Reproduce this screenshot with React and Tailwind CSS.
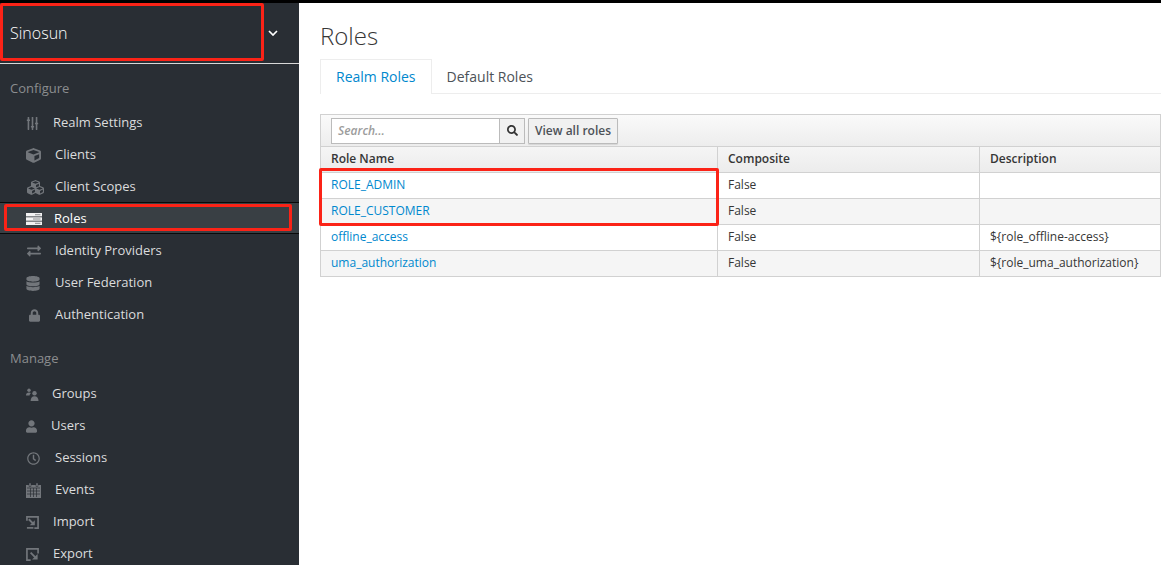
import React from 'react';
import {
  FaSlidersH, FaCube, FaCubes, FaExchangeAlt, FaDatabase, FaLock, FaUser,
  FaRegClock, FaSearch,
} from 'react-icons/fa';

function RolesIcon({ className }) {
  return (
    <svg viewBox="0 0 16 12" className={className}>
      <rect x="0" y="0" width="16" height="3.4" fill="#f2f2f2" />
      <rect x="0" y="4.3" width="16" height="3.4" fill="#f2f2f2" />
      <rect x="0" y="8.6" width="16" height="3.4" fill="#f2f2f2" />
      <rect x="9" y="1.2" width="5.5" height="1" fill="#8b8d8f" />
      <rect x="7" y="5.5" width="7.5" height="1" fill="#8b8d8f" />
      <rect x="9" y="9.8" width="5.5" height="1" fill="#8b8d8f" />
    </svg>
  );
}

function GroupsIcon({ className }) {
  return (
    <svg viewBox="0 0 13 13" className={className} fill="currentColor">
      <circle cx="3" cy="2.2" r="1.7" />
      <path d="M0 7.5C0 5.5 1.2 4.6 3 4.6c.8 0 1.4.2 1.9.5C4 6 3.6 6.8 3.5 7.5Z" />
      <circle cx="8.5" cy="5.2" r="2.2" />
      <path d="M4.6 13c0-3.2 1.4-4.8 3.9-4.8s4 1.6 4 4.8Z" />
    </svg>
  );
}

function CalendarIcon({ className }) {
  return (
    <svg viewBox="0 0 15 15" className={className}>
      <path d="M0 2h15v13H0Z" fill="currentColor" />
      <path d="M3 0h2v3.5H3ZM10 0h2v3.5h-2Z" fill="currentColor" stroke="#292e34" strokeWidth="0.5" />
      <path d="M1 5h13M1 8h13M1 11h13M4.5 5v9M7.5 5v9M10.5 5v9" stroke="#292e34" strokeWidth="0.7" fill="none" />
    </svg>
  );
}

function ImportIcon({ className }) {
  return (
    <svg viewBox="0 0 14 14" className={className} fill="none" stroke="currentColor">
      <path d="M1 5V1h12v12H9" strokeWidth="1.8" />
      <path d="M3 3.5 8 8.5" strokeWidth="2" />
      <path d="M9.5 4.5V10H4Z" fill="currentColor" stroke="none" />
      <path d="M1 12.8h7" strokeWidth="1.8" />
    </svg>
  );
}

function ExportIcon({ className }) {
  return (
    <svg viewBox="0 0 14 14" className={className} fill="none" stroke="currentColor">
      <path d="M5 13H1V1h12v5" strokeWidth="1.8" />
      <path d="M5 5 10 10" strokeWidth="2" />
      <path d="M12.5 6.5V12.5H6.5Z" fill="currentColor" stroke="none" />
    </svg>
  );
}

const configure = [
  { label: 'Realm Settings', icon: FaSlidersH, size: 'w-[13px] h-[13px] rotate-90', gap: 'w-[27px]' },
  { label: 'Clients', icon: FaCube, size: 'w-[15px] h-[15px]', gap: 'w-[29px]' },
  { label: 'Client Scopes', icon: FaCubes, size: 'w-[19px] h-[17px]', gap: 'w-[29px]' },
  { label: 'Roles', icon: RolesIcon, size: 'w-[16px] h-[12px]', gap: 'w-[28px]', active: true },
  { label: 'Identity Providers', icon: FaExchangeAlt, size: 'w-[16px] h-[14px]', gap: 'w-[29px]' },
  { label: 'User Federation', icon: FaDatabase, size: 'w-[14px] h-[15px]', gap: 'w-[29px]' },
  { label: 'Authentication', icon: FaLock, size: 'w-[11px] h-[13px] ml-[3px]', gap: 'w-[29px]' },
];

const manage = [
  { label: 'Groups', icon: GroupsIcon, size: 'w-[13px] h-[13px]', gap: 'w-[26px]' },
  { label: 'Users', icon: FaUser, size: 'w-[11px] h-[13px]', gap: 'w-[25px]' },
  { label: 'Sessions', icon: FaRegClock, size: 'w-[13px] h-[13px] ml-px', gap: 'w-[29px]' },
  { label: 'Events', icon: CalendarIcon, size: 'w-[15px] h-[15px]', gap: 'w-[29px]' },
  { label: 'Import', icon: ImportIcon, size: 'w-[13px] h-[13px]', gap: 'w-[27px]' },
  { label: 'Export', icon: ExportIcon, size: 'w-[13px] h-[13px]', gap: 'w-[27px]' },
];

const roles = [
  { name: 'ROLE_ADMIN', description: '' },
  { name: 'ROLE_CUSTOMER', description: '' },
  { name: 'offline_access', description: '${role_offline-access}' },
  { name: 'uma_authorization', description: '${role_uma_authorization}' },
];

function NavItem({ item }) {
  const Icon = item.icon;
  return (
    <div
      className={
        'relative flex h-8 items-center pl-[26px] text-[13px] ' +
        (item.active ? 'mt-[-1px] mb-px pt-px bg-[#393f44] border-y border-[#090909] text-white' : 'text-[#dbdcdd]')
      }
    >
      <div className={item.gap + ' shrink-0 flex items-center text-[#72767b]'}>
        <Icon className={item.size} />
      </div>
      <span>{item.label}</span>
      {item.active && (
        <div className="absolute left-[4px] top-px h-[27px] w-[288px] rounded-[2px] border-[3px] border-[#fb2317]" />
      )}
    </div>
  );
}

function Sidebar() {
  return (
    <div className="w-[299px] shrink-0 overflow-hidden bg-[#292e34]">
      <div className="relative flex h-[61px] items-center justify-between border-b border-[#d8d8d8] pl-2.5 pr-[21px]">
        <span className="text-base font-light text-white">Sinosun</span>
        <svg viewBox="0 0 10 6" className="h-[6px] w-[10px]" fill="none" stroke="#ffffff" strokeWidth="1.7">
          <path d="M1 1l4 4 4-4" />
        </svg>
        <div className="absolute left-0 top-0 h-[58px] w-[264px] rounded-[2px] border-[3px] border-[#fb2317]" />
      </div>
      <div className="pl-2.5 pt-[15px] pb-[10px] text-[13px] leading-[18px] text-[#8b8d8f]">Configure</div>
      <div>
        {configure.map((item) => <NavItem key={item.label} item={item} />)}
      </div>
      <div className="pl-2.5 pt-[18px] pb-[11px] text-[13px] leading-[18px] text-[#8b8d8f]">Manage</div>
      <div>
        {manage.map((item) => <NavItem key={item.label} item={item} />)}
      </div>
    </div>
  );
}

function RolesTable() {
  return (
    <div className="relative mt-5 border border-[#d1d1d1] text-xs text-[#363636]">
      <div className="flex h-8 items-center gap-[3px] bg-gradient-to-b from-[#fafafa] to-[#ededed] px-[10px] border-b border-[#d1d1d1]">
        <div className="flex h-[26px] w-[194px]">
          <div className="flex-1 border border-[#bbbbbb] bg-white pl-1.5 text-xs font-semibold italic leading-[24px] text-[#9c9c9c]">
            Search...
          </div>
          <div className="flex w-[25px] items-center justify-center border border-l-0 border-[#bbbbbb] bg-[#f1f1f1]">
            <FaSearch className="h-[11px] w-[11px] text-[#333333]" />
          </div>
        </div>
        <div className="flex h-[26px] items-center rounded-[1px] border border-[#bbbbbb] bg-[#f1f1f1] px-1.5 text-xs font-semibold text-[#4d5258] shadow-[0_1px_1px_rgba(0,0,0,0.1)]">
          View all roles
        </div>
      </div>
      <div className="grid grid-cols-[397px_262px_1fr] h-[26px] bg-gradient-to-b from-[#f5f5f5] to-[#ececec] border-b border-[#d1d1d1] font-semibold">
        <div className="flex items-center border-r border-[#d1d1d1] pb-px pl-[10px]">Role Name</div>
        <div className="flex items-center border-r border-[#d1d1d1] pb-px pl-[10px]">Composite</div>
        <div className="flex items-center pb-px pl-[10px]">Description</div>
      </div>
      {roles.map((role, i) => (
        <div
          key={role.name}
          className={
            'grid grid-cols-[397px_262px_1fr] ' +
            (i % 2 ? 'bg-[#f5f5f5] ' : 'bg-white ') +
            (i < roles.length - 1 ? 'h-[26px] border-b border-[#d1d1d1]' : 'h-[25px]')
          }
        >
          <div className="flex items-center border-r border-[#d1d1d1] pb-px pl-[10px] text-[#0088ce]">{role.name}</div>
          <div className="flex items-center border-r border-[#d1d1d1] pb-px pl-[10px]">False</div>
          <div className="flex items-center pb-px pl-[10px]">{role.description}</div>
        </div>
      ))}
      <div className="absolute left-[-2px] top-[53px] h-[58px] w-[400px] rounded-[2px] border-[3px] border-[#fb2317]" />
    </div>
  );
}

export default function App() {
  return (
    <div className="flex h-[565px] w-[1161px] flex-col overflow-hidden bg-white font-['Open_Sans',sans-serif]">
      <div className="h-[3px] shrink-0 bg-black" />
      <div className="flex min-h-0 flex-1">
        <Sidebar />
        <div className="min-w-0 flex-1 pl-[21px]">
          <h1 className="pt-[17px] text-2xl font-light leading-8 text-[#363636]">Roles</h1>
          <div className="mt-[7px] flex h-[35px] border-b border-[#ededed] text-sm">
            <div className="flex h-[35px] items-center border border-b-0 border-[#ededed] bg-white px-[15px] text-[#0088ce]">
              Realm Roles
            </div>
            <div className="flex items-center px-[15px] pt-px text-[#4d5258]">Default Roles</div>
          </div>
          <RolesTable />
        </div>
      </div>
    </div>
  );
}
